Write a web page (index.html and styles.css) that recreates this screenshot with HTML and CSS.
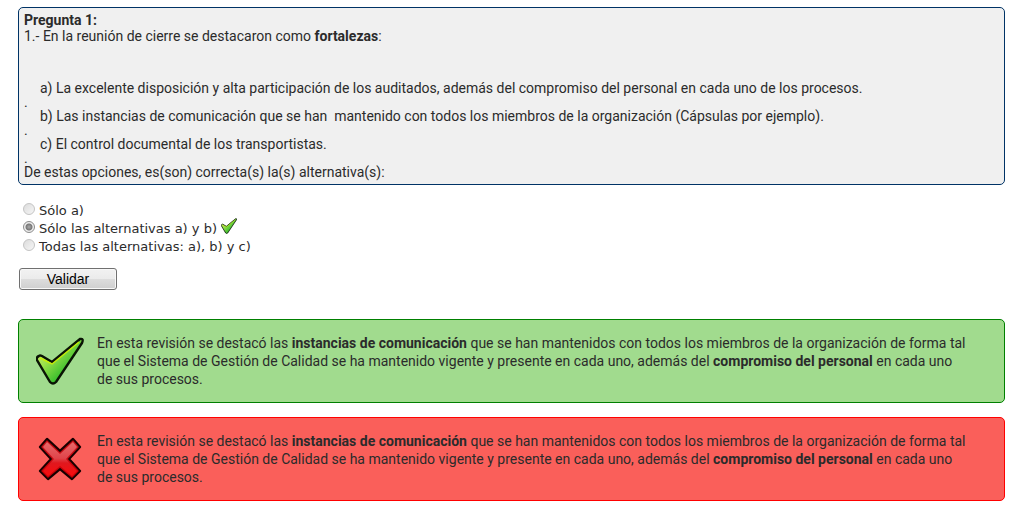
FILE: index.html
```html
<!DOCTYPE html>
<html lang="es">
<head>
<meta charset="utf-8">
<title>Pregunta 1</title>
<link rel="stylesheet" href="styles.css">
</head>
<body>
<svg class="defs" width="0" height="0" aria-hidden="true">
  <defs>
    <linearGradient id="green" x1="0" y1="0.1" x2="0.8" y2="0.9">
      <stop offset="0" stop-color="#d4f070"/>
      <stop offset="0.4" stop-color="#9be04a"/>
      <stop offset="0.8" stop-color="#35bd2c"/>
      <stop offset="1" stop-color="#1fae22"/>
    </linearGradient>
    <linearGradient id="red" x1="0" y1="0" x2="0" y2="1">
      <stop offset="0" stop-color="#ea7070"/>
      <stop offset="0.48" stop-color="#e0444a"/>
      <stop offset="0.6" stop-color="#e0181e"/>
      <stop offset="1" stop-color="#ff0a0a"/>
    </linearGradient>
    <symbol id="tick" viewBox="0 0 48 48">
      <path d="M3 19Q0 20 1 23L14 45Q17 48 20 45L46 6Q48 1 44 2L16 25L6 19Q4 18 3 19Z" fill="url(#green)" stroke="#0a1405" stroke-width="2.4" stroke-linejoin="round"/>
      <path d="M4 21L16 27L43 5" fill="none" stroke="#cdf000" stroke-width="1.4" opacity="0.9"/>
    </symbol>
  </defs>
</svg>
<main class="quiz">
  <section class="question">
    <h1 class="title">Pregunta 1:</h1>
    <p class="lead">1.- En la reunión de cierre se destacaron como <strong>fortalezas</strong>:</p>
    <p class="item">a) La excelente disposición y alta participación de los auditados, además del compromiso del personal en cada uno de los procesos.</p>
    <p class="dot">.</p>
    <p class="item">b) Las instancias de comunicación que se han&nbsp; mantenido con todos los miembros de la organización (Cápsulas por ejemplo).</p>
    <p class="dot">.</p>
    <p class="item">c) El control documental de los transportistas.</p>
    <p class="dot">.</p>
    <p class="text">De estas opciones, es(son) correcta(s) la(s) alternativa(s):</p>
  </section>
  <form class="answers">
    <label class="option"><input class="radio" type="radio" name="r" disabled><span>Sólo a)</span></label>
    <label class="option"><input class="radio" type="radio" name="r" checked disabled><span>Sólo las alternativas a) y b)</span><svg class="mark" aria-hidden="true"><use href="#tick"/></svg></label>
    <label class="option"><input class="radio" type="radio" name="r" disabled><span>Todas las alternativas: a), b) y c)</span></label>
    <button class="submit" type="button">Validar</button>
  </form>
  <section class="feedback good">
    <svg class="icon" aria-hidden="true"><use href="#tick"/></svg>
    <p class="message">En esta revisión se destacó las <strong>instancias de comunicación</strong> que se han mantenidos con todos los miembros de la organización de forma tal que el Sistema de Gestión de Calidad se ha mantenido vigente y presente en cada uno, además del <strong>compromiso del personal</strong> en cada uno de sus procesos.</p>
  </section>
  <section class="feedback bad">
    <svg class="icon" viewBox="0 0 48 48" aria-hidden="true">
      <path d="M11 4L24 16L37 4L44 12L33 24L44 36L36 44L24 34L12 44L4 36L15 24L4 12Z" fill="url(#red)" stroke="#160000" stroke-width="2.4" stroke-linejoin="round"/>
      <path d="M11 6L24 18L37 6L42 12L31 24L42 36L36 42L24 32L12 42L6 36L17 24L6 12Z" fill="none" stroke="#c00008" stroke-width="1.4" opacity="0.8"/>
    </svg>
    <p class="message">En esta revisión se destacó las <strong>instancias de comunicación</strong> que se han mantenidos con todos los miembros de la organización de forma tal que el Sistema de Gestión de Calidad se ha mantenido vigente y presente en cada uno, además del <strong>compromiso del personal</strong> en cada uno de sus procesos.</p>
  </section>
</main>
</body>
</html>
```
FILE: styles.css
```css
* { box-sizing: border-box; }
body {
  margin: 0;
  background: #fff;
  color: #2b2b2b;
  font: 14px/16px Roboto, Verdana, sans-serif;
}
.defs { position: absolute; }
.quiz { padding: 7px 12px 12px 18px; }
.question {
  padding: 4px 5px;
  background: #f0f0f0;
  border: 1px solid #003366;
  border-radius: 5px;
}
.title, .lead, .item, .dot, .text, .message { margin: 0; font-size: 14px; }
.lead { margin-bottom: 36px; }
.item { padding-left: 16px; }
.dot { line-height: 12px; }
.answers { padding: 16px 0 0 1px; }
.option {
  display: flex;
  align-items: center;
  gap: 4px;
  height: 18px;
  padding-left: 4px;
  font: 13px/16px Verdana, "DejaVu Sans", sans-serif;
}
.option span { padding-top: 2px; }
.radio {
  appearance: none;
  width: 12px;
  height: 12px;
  margin: 0 0 2px;
  border: 1px solid #c4c4c4;
  border-radius: 50%;
  background: linear-gradient(135deg, #dcdcdc, #f6f6f6);
}
.radio:checked {
  border-color: #8c8c8c;
  background: radial-gradient(circle, #aaa 0, #888 2px, #777 3px, #eee 4px);
}
.mark { width: 16px; height: 16px; margin-bottom: 4px; }
.submit {
  display: block;
  width: 98px;
  height: 22px;
  margin: 13px 0 29px;
  padding: 0;
  border: 1px solid #707070;
  border-radius: 3px;
  background: linear-gradient(#f2f2f2 0, #ebebeb 50%, #dddddd 50%, #cfcfcf 100%);
  box-shadow: inset 0 0 0 1px #f8f8f8;
  color: #000;
  font: 14px/20px "Liberation Sans", Arial, sans-serif;
}
.feedback {
  display: flex;
  align-items: flex-start;
  gap: 13px;
  min-height: 84px;
  padding: 14px 36px 14px 17px;
  border: 1px solid;
  border-radius: 5px;
  line-height: 18px;
}
.good { background: #a1db8e; border-color: #008000; margin-bottom: 14px; }
.bad { background: #fa5f5a; border-color: #ff0000; }
.icon { flex: none; width: 48px; height: 48px; margin-top: 3px; }
```
